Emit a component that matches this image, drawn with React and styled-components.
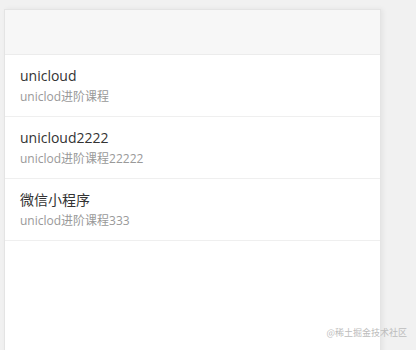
import React from "react";
import styled, { createGlobalStyle } from "styled-components";

const Global = createGlobalStyle`
  html, body { margin: 0; padding: 0; background: #f1f1f1; }
  body { font-family: "Open Sans", "Noto Sans CJK SC", sans-serif; }
`;

const Page = styled.div`
  position: relative;
  width: 416px;
  height: 350px;
  padding: 9px 0 0 4px;
  box-sizing: border-box;
  overflow: hidden;
`;

const Card = styled.div`
  width: 377px;
  height: 360px;
  background: #fff;
  border: 1px solid #e4e4e4;
  box-sizing: border-box;
  box-shadow: 2px 0 5px rgba(0, 0, 0, 0.06);
  display: flex;
  flex-direction: column;
`;

const Header = styled.div`
  height: 44px;
  background: #f7f7f7;
  border-bottom: 1px solid #ececec;
`;

const List = styled.ul`
  list-style: none;
  margin: 0;
  padding: 0;
`;

const Row = styled.li`
  display: flex;
  flex-direction: column;
  padding: 9px 15px 10px;
  border-bottom: 1px solid #efefef;
`;

const Title = styled.div`
  font-size: 14px;
  line-height: 23px;
  color: #333;
`;

const Sub = styled.div`
  font-size: 12px;
  line-height: 19px;
  color: #999;
`;

const Watermark = styled.div`
  position: absolute;
  right: 9px;
  bottom: 12px;
  font-size: 9px;
  line-height: 10px;
  color: #bcbcbc;
  font-family: "Noto Sans CJK SC", sans-serif;
`;

const items = [
  { title: "unicloud", sub: "uniclod进阶课程" },
  { title: "unicloud2222", sub: "uniclod进阶课程22222" },
  { title: "微信小程序", sub: "uniclod进阶课程333" },
];

export default function App() {
  return (
    <Page>
      <Global />
      <Card>
        <Header />
        <List>
          {items.map((it) => (
            <Row key={it.title}>
              <Title>{it.title}</Title>
              <Sub>{it.sub}</Sub>
            </Row>
          ))}
        </List>
      </Card>
      <Watermark>@稀土掘金技术社区</Watermark>
    </Page>
  );
}
